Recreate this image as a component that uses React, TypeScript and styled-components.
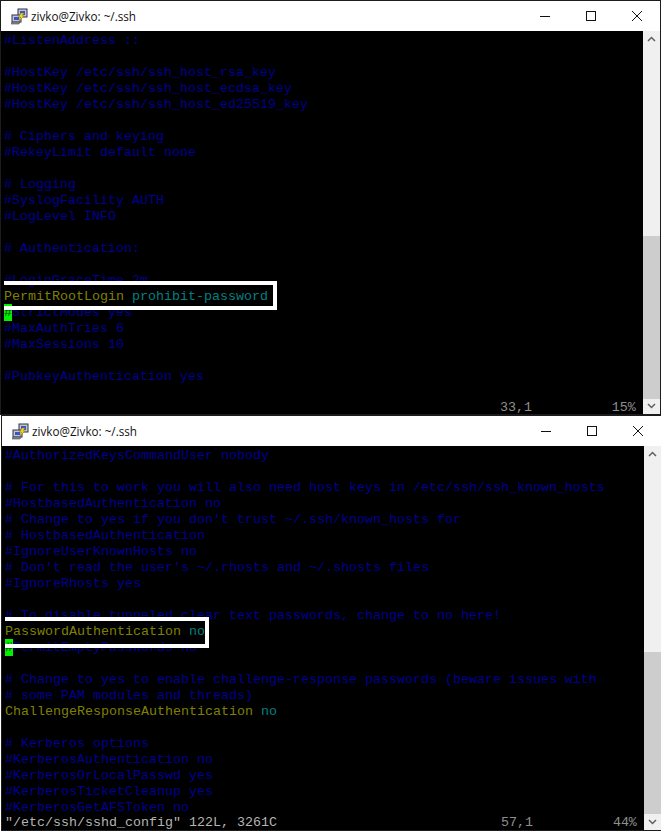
import React from "react";
import styled, { createGlobalStyle } from "styled-components";

const GlobalStyle = createGlobalStyle`
  html, body {
    margin: 0;
    padding: 0;
    background: #ffffff;
    overflow: hidden;
  }
`;

const Page = styled.div`
  width: 661px;
  height: 831px;
  display: flex;
  flex-direction: column;
  overflow: hidden;
`;

const Window = styled.div<{ $indent: number; $height: number }>`
  width: 661px;
  height: ${(p) => p.$height}px;
  margin-left: ${(p) => p.$indent}px;
  flex: none;
  display: flex;
  flex-direction: column;
  box-sizing: border-box;
  border: 1px solid #1c1c1c;
  background: #000;
  overflow: hidden;
`;

const TitleBar = styled.div`
  height: 30px;
  flex: none;
  display: flex;
  align-items: center;
  justify-content: space-between;
  background: #fff;
`;

const TitleLeft = styled.div`
  display: flex;
  align-items: center;
  gap: 3px;
  padding-left: 10px;
`;

const TitleText = styled.span`
  font-family: "Open Sans", "Noto Sans", sans-serif;
  font-size: 11.7px;
  color: #111;
  white-space: pre;
`;

const Controls = styled.div`
  display: flex;
`;

const ControlButton = styled.div`
  width: 46px;
  height: 30px;
  display: flex;
  align-items: center;
  justify-content: center;
`;

const Body = styled.div`
  flex: 1;
  display: flex;
  min-height: 0;
`;

const Terminal = styled.div`
  flex: 1;
  padding: 2px 0 0 3px;
  font-family: "Liberation Mono", "DejaVu Sans Mono", monospace;
  font-size: 13.33px;
  line-height: 16px;
  white-space: pre;
  overflow: hidden;
  background: #000;
`;

const Line = styled.div`
  position: relative;
  height: 16px;
`;

const StatusLine = styled.div`
  height: 14px;
  line-height: 14px;
`;

const Comment = styled.span`
  color: #000092;
`;

const Keyword = styled.span`
  color: #808000;
`;

const Value = styled.span`
  color: #008080;
`;

const Status = styled.span`
  color: #b4b4b4;
`;

const Ruler = styled.span`
  color: #8f8f8f;
`;

const Cursor = styled.span`
  display: inline-block;
  width: 8px;
  height: 17px;
  margin-top: -1px;
  line-height: 18px;
  vertical-align: top;
  background: #00f000;
  color: #004000;
`;

const Highlight = styled.div<{ $width: number; $top: number; $height: number }>`
  position: absolute;
  left: 0;
  top: ${(p) => p.$top}px;
  width: ${(p) => p.$width}px;
  height: ${(p) => p.$height}px;
  box-sizing: border-box;
  border: 4px solid #fff;
  border-left: 0;
  z-index: 2;
`;

const Scrollbar = styled.div`
  width: 17px;
  flex: none;
  display: flex;
  flex-direction: column;
  background: #f0f0f0;
`;

const ArrowCell = styled.div`
  height: 16px;
  flex: none;
  display: flex;
  align-items: center;
  justify-content: center;
`;

const Track = styled.div`
  flex: 1;
  min-height: 0;
`;

const Thumb = styled.div<{ $offset: number; $size: number }>`
  margin-top: ${(p) => p.$offset}px;
  height: ${(p) => p.$size}px;
  background: #cdcdcd;
`;

const PuttyIcon = () => (
  <svg width="17" height="17" viewBox="0 0 17 17">
    <rect x="7" y="1" width="9" height="8" fill="#c4c4d0" stroke="#30304a" />
    <rect x="9" y="3" width="5" height="4" fill="#3a55c8" />
    <rect x="1" y="7" width="9" height="7" fill="#c4c4d0" stroke="#30304a" />
    <rect x="3" y="9" width="5" height="3" fill="#3a55c8" />
    <path d="M1 14h8l-1 2H0z" fill="#8a8a92" stroke="#45454f" strokeWidth="0.6" />
    <path d="M10 5l3 0-2 3 2 0-5 5 1.500-4-2 0z" fill="#f4d81c" stroke="#8a7400" strokeWidth="0.5" />
  </svg>
);

const MinimizeIcon = () => (
  <svg width="10" height="10" viewBox="0 0 10 10">
    <path d="M0 5.500h10" stroke="#111" strokeWidth="1" />
  </svg>
);

const MaximizeIcon = () => (
  <svg width="10" height="10" viewBox="0 0 10 10">
    <rect x="0.500" y="0.500" width="9" height="9" fill="none" stroke="#111" />
  </svg>
);

const CloseIcon = () => (
  <svg width="10" height="10" viewBox="0 0 10 10">
    <path d="M0 0l10 10M10 0L0 10" stroke="#111" strokeWidth="1" />
  </svg>
);

const ArrowUp = () => (
  <svg width="9" height="6" viewBox="0 0 9 6">
    <path d="M1 5l3.500-3.500L8 5" fill="none" stroke="#606060" strokeWidth="1.500" />
  </svg>
);

const ArrowDown = () => (
  <svg width="9" height="6" viewBox="0 0 9 6">
    <path d="M1 1l3.500 3.500L8 1" fill="none" stroke="#606060" strokeWidth="1.500" />
  </svg>
);

const Chrome: React.FC<{ thumbOffset: number; thumbSize: number; indent: number; height: number; children: React.ReactNode }> = ({
  thumbOffset,
  thumbSize,
  indent,
  height,
  children,
}) => (
  <Window $indent={indent} $height={height}>
    <TitleBar>
      <TitleLeft>
        <PuttyIcon />
        <TitleText>zivko@Zivko: ~/.ssh</TitleText>
      </TitleLeft>
      <Controls>
        <ControlButton>
          <MinimizeIcon />
        </ControlButton>
        <ControlButton>
          <MaximizeIcon />
        </ControlButton>
        <ControlButton>
          <CloseIcon />
        </ControlButton>
      </Controls>
    </TitleBar>
    <Body>
      <Terminal>{children}</Terminal>
      <Scrollbar>
        <ArrowCell>
          <ArrowUp />
        </ArrowCell>
        <Track>
          <Thumb $offset={thumbOffset} $size={thumbSize} />
        </Track>
        <ArrowCell>
          <ArrowDown />
        </ArrowCell>
      </Scrollbar>
    </Body>
  </Window>
);

const comments = (lines: string[]) =>
  lines.map((text, i) => (
    <Line key={i}>
      <Comment>{text}</Comment>
    </Line>
  ));

const topBefore = [
  "#ListenAddress ::",
  "",
  "#HostKey /etc/ssh/ssh_host_rsa_key",
  "#HostKey /etc/ssh/ssh_host_ecdsa_key",
  "#HostKey /etc/ssh/ssh_host_ed25519_key",
  "",
  "# Ciphers and keying",
  "#RekeyLimit default none",
  "",
  "# Logging",
  "#SyslogFacility AUTH",
  "#LogLevel INFO",
  "",
  "# Authentication:",
  "",
  "#LoginGraceTime 2m",
];

const topAfter = ["#MaxAuthTries 6", "#MaxSessions 10", "", "#PubkeyAuthentication yes", ""];

const bottomBefore = [
  "#AuthorizedKeysCommandUser nobody",
  "",
  "# For this to work you will also need host keys in /etc/ssh/ssh_known_hosts",
  "#HostbasedAuthentication no",
  "# Change to yes if you don't trust ~/.ssh/known_hosts for",
  "# HostbasedAuthentication",
  "#IgnoreUserKnownHosts no",
  "# Don't read the user's ~/.rhosts and ~/.shosts files",
  "#IgnoreRhosts yes",
  "",
  "# To disable tunneled clear text passwords, change to no here!",
];

const bottomMiddle = [
  "",
  "# Change to yes to enable challenge-response passwords (beware issues with",
  "# some PAM modules and threads)",
];

const bottomAfter = [
  "",
  "# Kerberos options",
  "#KerberosAuthentication no",
  "#KerberosOrLocalPasswd yes",
  "#KerberosTicketCleanup yes",
  "#KerberosGetAFSToken no",
];

const pad = (n: number) => " ".repeat(n);

export default function App() {
  return (
    <Page>
      <GlobalStyle />
      <Chrome indent={0} height={415} thumbOffset={189} thumbSize={163}>
        {comments(topBefore)}
        <Line>
          <Keyword>PermitRootLogin</Keyword> <Value>prohibit-password</Value>
          <Highlight $width={273} $top={-8} $height={29} />
        </Line>
        <Line>
          <Cursor>#</Cursor>
          <Comment>StrictModes yes</Comment>
        </Line>
        {comments(topAfter)}
        <StatusLine>
          <Ruler>{pad(62) + "33,1" + pad(10) + "15%"}</Ruler>
        </StatusLine>
      </Chrome>
      <Chrome indent={1} height={416} thumbOffset={190} thumbSize={162}>
        {comments(bottomBefore)}
        <Line>
          <Keyword>PasswordAuthentication</Keyword> <Value>no</Value>
          <Highlight $width={204} $top={-7} $height={31} />
        </Line>
        <Line>
          <Cursor>#</Cursor>
          <Comment>PermitEmptyPasswords no</Comment>
        </Line>
        {comments(bottomMiddle)}
        <Line>
          <Keyword>ChallengeResponseAuthentication</Keyword> <Value>no</Value>
        </Line>
        {comments(bottomAfter)}
        <StatusLine>
          <Status>{'"/etc/ssh/sshd_config" 122L, 3261C'}</Status>
          <Ruler>{pad(28) + "57,1" + pad(10) + "44%"}</Ruler>
        </StatusLine>
      </Chrome>
    </Page>
  );
}
